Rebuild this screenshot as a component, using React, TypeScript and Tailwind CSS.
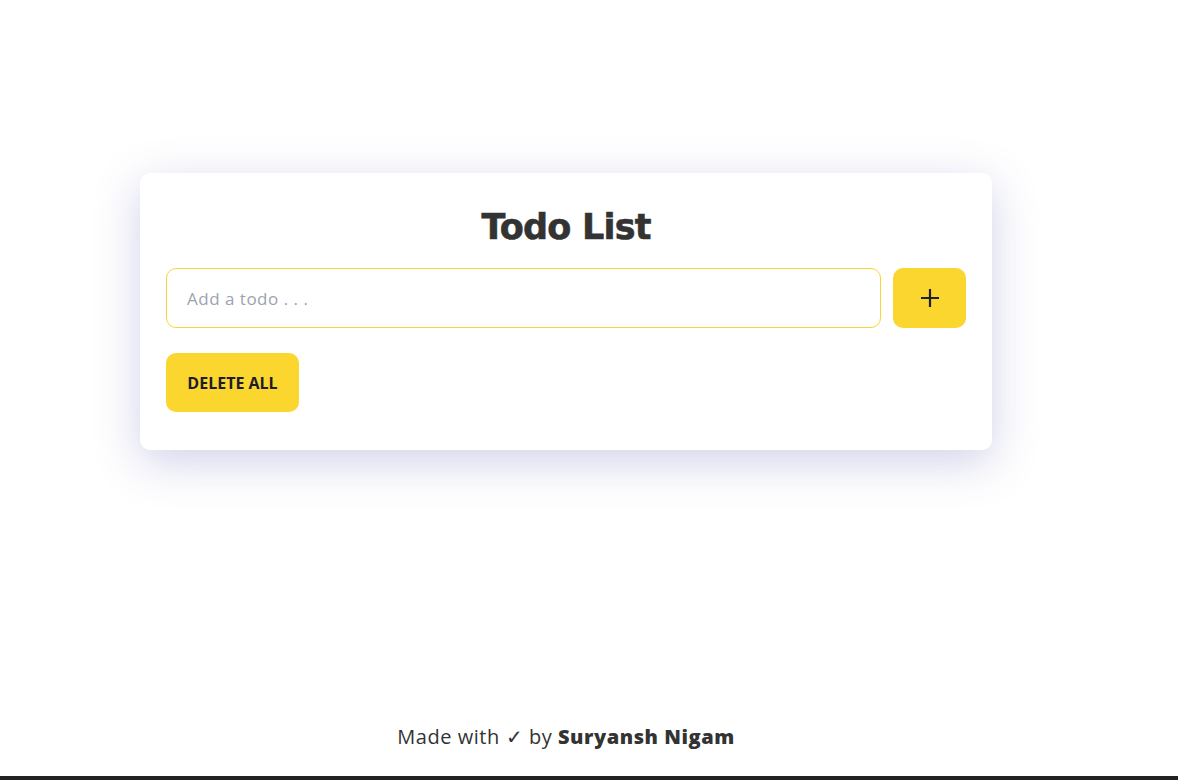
import React from "react";

export default function App() {
  return (
    <div className="min-h-[780px] w-full bg-white flex flex-col" style={{ fontFamily: "Inter, 'Open Sans', sans-serif" }}>
      <div className="w-[1132px] flex-1 flex flex-col items-center">
        <div className="mt-[173px] w-[852px] h-[277px] bg-white rounded-[10px] shadow-[0_12px_45px_rgba(90,90,180,0.28)] px-[26px] pt-[30px]">
          <h1 className="text-center text-[35px] leading-[48px] font-black tracking-[-0.8px] text-[#333333]" style={{ fontFamily: "'DejaVu Sans', sans-serif", WebkitTextStroke: "0.6px #333333" }}>
            Todo List
          </h1>
          <div className="mt-[17px] flex gap-[12px]">
            <input
              className="flex-1 h-[60px] rounded-[10px] border border-[#f8d43a] px-[20px] text-[17px] tracking-[0.5px] text-[#333] placeholder:text-[#9ca3af] outline-none"
              placeholder="Add a todo . . ."
              style={{ fontFamily: "'Open Sans', sans-serif" }}
            />
            <button className="w-[73px] h-[60px] rounded-[10px] bg-[#fad62e] flex items-center justify-center">
              <svg width="22" height="22" viewBox="0 0 22 22">
                <path d="M11 2v18M2 11h18" stroke="#1f1f24" strokeWidth="2.2" />
              </svg>
            </button>
          </div>
          <button
            className="mt-[25px] w-[133px] h-[59px] rounded-[10px] bg-[#fad62e] text-[16px] font-bold text-[#1c1c2b]"
            style={{ fontFamily: "'Open Sans', sans-serif" }}
          >
            DELETE ALL
          </button>
        </div>
        <div className="flex-1" />
        <div className="mb-[24px] text-[20px] tracking-[0.55px] text-[#333333]" style={{ fontFamily: "'Open Sans', sans-serif" }}>
          Made with ✓ by <span className="font-extrabold">Suryansh Nigam</span>
        </div>
      </div>
      <div className="h-[4px] w-full bg-[#222222]" />
    </div>
  );
}
